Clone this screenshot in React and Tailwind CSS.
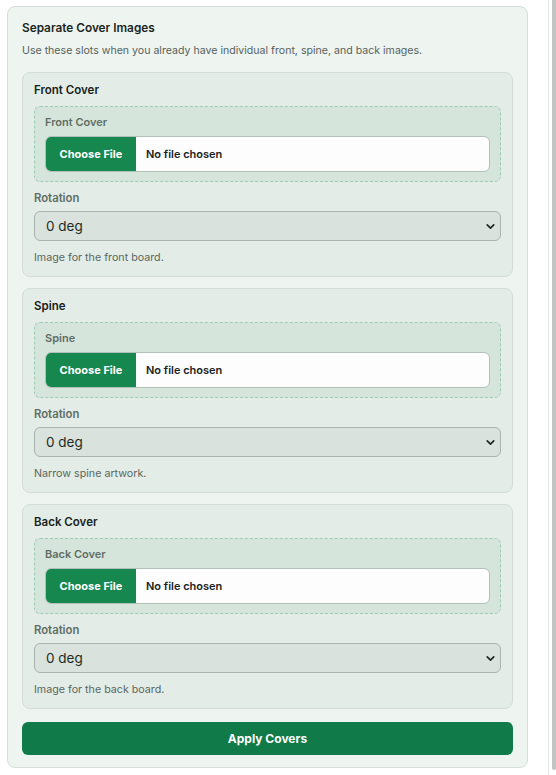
import { ChevronDown } from 'lucide-react';

const slots = [
    { title: 'Front Cover', help: 'Image for the front board.' },
    { title: 'Spine', help: 'Narrow spine artwork.' },
    { title: 'Back Cover', help: 'Image for the back board.' },
];

const CoverSlot = ({ title, help }) => {
    return (
        <div className="rounded-lg border border-[#d2ddd6] bg-[#e3ece6] px-[11px] pt-[8px] pb-[10px]">
            <h3 className="text-[11.5px] leading-[18px] font-semibold text-[#17211b]">{title}</h3>

            <div className="mt-[7px] rounded-md border border-dashed border-[#9ccdb3] bg-[#d6e5dc] px-[10px] pt-[7px] pb-[9px]">
                <div className="text-[11px] leading-[16px] font-semibold text-[#5f6d65]">{title}</div>
                <div className="mt-[6px] flex h-[36px] items-center overflow-hidden rounded-md border border-[#b3c0b8] bg-[#fcfdfc]">
                    <span className="flex h-full w-[90px] items-center justify-center bg-[#15874f] text-[11px] font-bold text-white">
                        Choose File
                    </span>
                    <span className="ml-[10px] text-[11px] font-semibold text-[#1b221e]">No file chosen</span>
                </div>
            </div>

            <div className="mt-[8px] text-[11.3px] leading-[16px] font-semibold text-[#5f6d65]">Rotation</div>
            <div className="relative mt-[5px]">
                <select className="h-[30px] w-full appearance-none rounded-md border border-[#a8b5ad] bg-[#d9e2dd] pl-[11px] text-[13.5px] text-[#1f2a24] outline-none">
                    <option>0 deg</option>
                    <option>90 deg</option>
                    <option>180 deg</option>
                    <option>270 deg</option>
                </select>
                <ChevronDown size={13} strokeWidth={3.2} className="pointer-events-none absolute right-[4px] top-[9px] text-[#1f2a24]" />
            </div>
            <p className="mt-[9px] text-[10.7px] leading-[16px] text-[#5b6761]">{help}</p>
        </div>
    );
};

export default function App() {
    return (
        <div className="flex h-[775px] w-[556px] bg-white font-['Inter',sans-serif]">
            <div className="w-[548px] pl-[7px] pr-[20px] pt-[6px]">
                <div className="rounded-lg border border-[#d5dfd9] bg-[#eef4f0] px-[14px] pt-[12px] pb-[12px]">
                    <h2 className="text-[11.8px] leading-[18px] font-semibold text-[#1b2620]">Separate Cover Images</h2>
                    <p className="mt-[6px] text-[10.6px] leading-[16px] text-[#56625c]">
                        Use these slots when you already have individual front, spine, and back images.
                    </p>

                    <div className="mt-[13px] flex flex-col gap-[11px]">
                        {slots.map((s) => (
                            <CoverSlot key={s.title} title={s.title} help={s.help} />
                        ))}
                    </div>

                    <button className="mt-[13px] flex h-[33px] w-full items-center justify-center rounded-md bg-[#107a48] text-[12px] font-bold text-white">
                        Apply Covers
                    </button>
                </div>
            </div>
            <div className="w-px bg-[#e4e6e5]" />
            <div className="ml-[3px] h-[770px] w-[4px] rounded-b-sm bg-[#c2c4c3]" />
        </div>
    );
}
